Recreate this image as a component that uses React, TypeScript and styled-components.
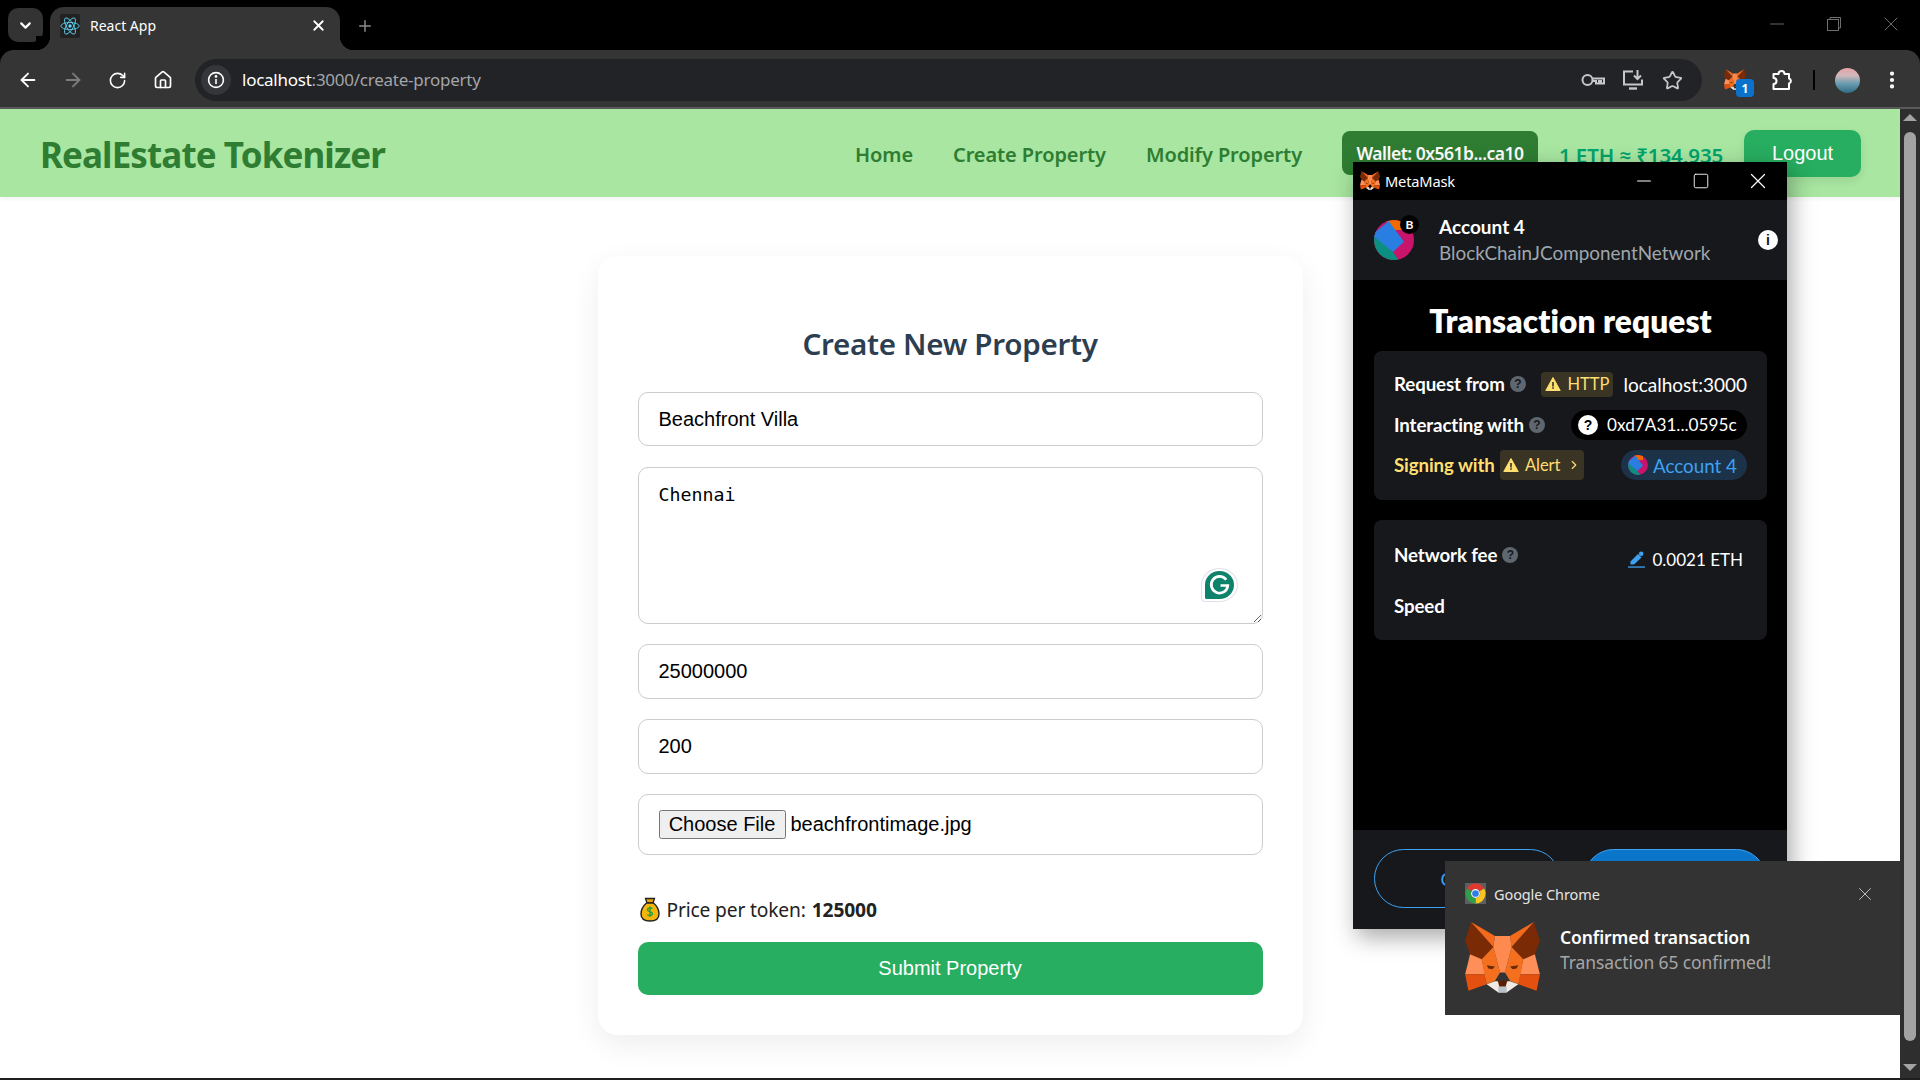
import React from "react";
import styled, { createGlobalStyle } from "styled-components";
import {
  ArrowLeft,
  ArrowRight,
  RotateCw,
  Home,
  Star,
  EllipsisVertical,
  ChevronDown,
  ChevronRight,
  X,
  Plus,
  Minus,
  Square,
} from "lucide-react";

const UI = `"Noto Sans", "Open Sans", sans-serif`;
const SANS = `"Liberation Sans", Arial, sans-serif`;
const MM = `Lato, "Noto Sans", sans-serif`;

const Global = createGlobalStyle`
  html, body { margin: 0; padding: 0; background: #000; }
  * { box-sizing: border-box; }
`;

const Screen = styled.div`
  position: relative;
  width: 1920px;
  height: 1080px;
  overflow: hidden;
  display: flex;
  flex-direction: column;
  background: #000;
  font-family: ${UI};
`;

/* ---------- browser chrome ---------- */
const TabStrip = styled.div`
  height: 50px;
  display: flex;
  align-items: flex-end;
  padding-left: 8px;
  background: #000;
`;
const TabMenu = styled.div`
  width: 35px;
  height: 34px;
  margin-bottom: 8px;
  border-radius: 10px;
  background: #333;
  color: #fff;
  display: flex;
  align-items: center;
  justify-content: center;
`;
const Tab = styled.div`
  position: relative;
  width: 290px;
  height: 43px;
  margin-left: 7px;
  padding: 0 13px 6px 10px;
  display: flex;
  align-items: center;
  background: #353535;
  border-radius: 14px 14px 0 0;
  color: #fff;
  font-size: 14px;
  &::before,
  &::after {
    content: "";
    position: absolute;
    bottom: 0;
    width: 14px;
    height: 14px;
  }
  &::before {
    left: -14px;
    background: radial-gradient(circle at 0 0, #000 14px, #353535 14.5px);
  }
  &::after {
    right: -14px;
    background: radial-gradient(circle at 100% 0, #000 14px, #353535 14.5px);
  }
`;
const Favicon = styled.div`
  width: 20px;
  height: 24px;
  background: #222;
  border-radius: 2px;
  margin-right: 10px;
  display: flex;
  align-items: center;
  justify-content: center;
`;
const TabTitle = styled.span`
  flex: 1;
`;
const NewTab = styled.div`
  width: 30px;
  height: 43px;
  padding-bottom: 6px;
  margin-left: 10px;
  color: #8a8a8a;
  display: flex;
  align-items: center;
  justify-content: center;
`;
const WindowButtons = styled.div`
  margin-left: auto;
  align-self: flex-start;
  display: flex;
  height: 48px;
  padding-right: 1px;
  color: #6e6e6e;
`;
const WindowButton = styled.div`
  width: 57px;
  display: flex;
  align-items: center;
  justify-content: center;
`;

const Toolbar = styled.div`
  height: 59px;
  padding: 3px 15px 0 5px;
  display: flex;
  align-items: center;
  background: #353535;
  border-radius: 14px 14px 0 0;
  border-bottom: 2px solid #5a5a5a;
`;
const ToolSlot = styled.div<{ $w?: number; $dim?: boolean }>`
  width: ${(p) => p.$w ?? 45}px;
  height: 40px;
  flex: none;
  position: relative;
  display: flex;
  align-items: center;
  justify-content: center;
  color: ${(p) => (p.$dim ? "#7c7c7c" : "#fff")};
`;
const Omnibox = styled.div`
  flex: 1;
  height: 42px;
  margin-left: 10px;
  padding: 0 10px 0 6px;
  display: flex;
  align-items: center;
  background: #222327;
  border-radius: 21px;
`;
const InfoBubble = styled.div`
  width: 30px;
  height: 30px;
  border-radius: 50%;
  background: #35363a;
  display: flex;
  align-items: center;
  justify-content: center;
`;
const Url = styled.div`
  flex: 1;
  margin-left: 11px;
  padding-bottom: 2px;
  font-size: 17px;
  letter-spacing: -0.25px;
  color: #a3a5a9;
`;
const UrlHost = styled.span`
  color: #fff;
`;
const OmniIcon = styled.div`
  width: 39px;
  display: flex;
  justify-content: center;
  color: #c7c7c7;
`;
const ExtBadge = styled.div`
  position: absolute;
  left: 34px;
  top: 19px;
  width: 18px;
  height: 18px;
  border-radius: 4px;
  background: #0b72cc;
  color: #fff;
  font-size: 12px;
  font-weight: 700;
  display: flex;
  align-items: center;
  justify-content: center;
`;
const Divider = styled.div`
  width: 2px;
  height: 20px;
  margin-left: 17px;
  background: #000;
  flex: none;
`;
const ProfileImage = styled.div`
  width: 25px;
  height: 25px;
  border-radius: 50%;
  background: linear-gradient(180deg, #e6a3a6 0%, #d2b7bb 30%, #6e9fb0 60%, #2f6b85 100%);
`;

/* ---------- page ---------- */
const Viewport = styled.div`
  height: 969px;
  display: flex;
  background: #fff;
`;
const Page = styled.main`
  flex: 1;
  display: flex;
  flex-direction: column;
  align-items: center;
  background: #fff;
`;
const Scrollbar = styled.div`
  width: 20px;
  padding: 5px 4px;
  background: #2e2e2e;
  display: flex;
  flex-direction: column;
  align-items: center;
`;
const ScrollArrow = styled.div<{ $down?: boolean }>`
  flex: none;
  width: 0;
  height: 0;
  border-left: 7px solid transparent;
  border-right: 7px solid transparent;
  ${(p) =>
    p.$down
      ? "border-top: 7px solid #a3a3a3; margin-top: 23px;"
      : "border-bottom: 7px solid #a3a3a3; margin-bottom: 11px;"}
`;
const ScrollThumb = styled.div`
  width: 12px;
  height: 909px;
  flex: none;
  border-radius: 6px;
  background: #a3a3a3;
`;
const BottomEdge = styled.div`
  height: 2px;
  background: #1f1f1f;
`;

const Navbar = styled.nav`
  width: 100%;
  height: 88px;
  flex: none;
  padding: 0 39px 0 40px;
  display: flex;
  align-items: center;
  justify-content: space-between;
  background: #a8e6a1;
  box-shadow: 0 2px 4px rgba(0, 0, 0, 0.05);
`;
const Brand = styled.div`
  padding-top: 3px;
  font-size: 35px;
  font-weight: 700;
  letter-spacing: -0.9px;
  color: #2e7d32;
`;
const NavGroup = styled.div`
  display: flex;
  align-items: center;
`;
const NavLink = styled.a`
  margin-right: 40px;
  padding-top: 3px;
  font-size: 20px;
  font-weight: 600;
  letter-spacing: -0.1px;
  color: #2e7d32;
`;
const WalletBadge = styled.div`
  width: 196px;
  height: 44px;
  border-radius: 8px;
  background: #2e7d32;
  color: #fff;
  font-size: 17.5px;
  font-weight: 600;
  letter-spacing: -0.5px;
  display: flex;
  align-items: center;
  justify-content: center;
`;
const Rate = styled.div`
  width: 164px;
  margin: 0 21px;
  padding-top: 3px;
  font-size: 20.5px;
  font-weight: 600;
  letter-spacing: -0.1px;
  white-space: nowrap;
  color: #00a36c;
`;
const LogoutButton = styled.button`
  width: 117px;
  height: 47px;
  border: 0;
  border-radius: 10px;
  background: #27ae60;
  color: #fff;
  font-family: ${SANS};
  font-size: 20px;
  box-shadow: 0 4px 10px rgba(0, 0, 0, 0.08);
`;

const Card = styled.section`
  width: 705px;
  height: 779px;
  margin-top: 59px;
  padding: 40px;
  border-radius: 20px;
  background: #fff;
  box-shadow: 0 10px 30px rgba(0, 0, 0, 0.07);
`;
const Title = styled.h2`
  margin: 27px 0 28px;
  height: 41px;
  line-height: 41px;
  text-align: center;
  font-size: 29.6px;
  font-weight: 600;
  letter-spacing: -0.3px;
  color: #2c3e50;
`;
const Form = styled.form`
  display: flex;
  flex-direction: column;
  gap: 20.5px;
`;
const fieldCss = `
  width: 100%;
  border: 1.25px solid #ccc;
  border-radius: 10px;
  background: #fff;
  color: #000;
  padding: 15px 20px;
  outline: none;
`;
const TextInput = styled.input`
  ${fieldCss}
  height: 54.4px;
  font-family: ${SANS};
  font-size: 20px;
`;
const AreaWrap = styled.div`
  position: relative;
  height: 157px;
`;
const TextArea = styled.textarea`
  ${fieldCss}
  display: block;
  height: 157px;
  resize: vertical;
  font-family: "DejaVu Sans Mono", monospace;
  font-size: 18.3px;
  line-height: 24px;
`;
const GrammarlyBadge = styled.div`
  position: absolute;
  right: 25px;
  bottom: 22px;
  width: 37px;
  height: 34px;
  padding: 2px 3px;
  background: #fff;
  border: 1px solid #dfe3ea;
  border-radius: 50% 50% 50% 4px;
  display: flex;
`;
const FileField = styled.div`
  ${fieldCss}
  height: 61px;
  display: flex;
  align-items: center;
  font-family: ${SANS};
  font-size: 20px;
`;
const FileButton = styled.button`
  width: 127px;
  height: 29px;
  padding: 0;
  margin-right: 5px;
  border: 1.25px solid #767676;
  border-radius: 2.5px;
  background: #efefef;
  color: #000;
  font-family: ${SANS};
  font-size: 20px;
`;
const PriceRow = styled.p`
  margin: 31px 0 1px;
  height: 46px;
  display: flex;
  align-items: center;
  font-size: 19.2px;
  letter-spacing: -0.15px;
  color: #222;
`;
const PriceValue = styled.strong`
  margin-left: 6px;
  font-weight: 700;
`;
const SubmitButton = styled.button`
  height: 53px;
  margin-top: 9px;
  border: 0;
  border-radius: 10px;
  background: #27ae60;
  color: #fff;
  font-family: ${SANS};
  font-size: 20px;
`;

/* ---------- MetaMask popup window ---------- */
const MetaWindow = styled.aside`
  position: absolute;
  left: 1353px;
  top: 162px;
  width: 434px;
  height: 767px;
  display: flex;
  flex-direction: column;
  background: #000;
  color: #fff;
  box-shadow: 4px 8px 22px rgba(0, 0, 0, 0.35);
`;
const MetaTitleBar = styled.div`
  height: 38px;
  flex: none;
  padding: 0 1px 0 7px;
  display: flex;
  align-items: center;
  font-size: 14.7px;
`;
const MetaTitle = styled.span`
  flex: 1;
  margin-left: 5px;
  letter-spacing: -0.2px;
`;
const MetaControl = styled.div`
  width: 57px;
  display: flex;
  justify-content: center;
`;
const AccountHeader = styled.header`
  height: 80px;
  flex: none;
  padding: 0 9px 0 21px;
  display: flex;
  align-items: center;
  background: #16181b;
  font-family: ${MM};
`;
const AvatarWrap = styled.div`
  position: relative;
  width: 40px;
  height: 40px;
  margin-right: 25px;
`;
const NetworkBadge = styled.div`
  position: absolute;
  right: -5px;
  top: -5px;
  width: 19px;
  height: 19px;
  border-radius: 50%;
  background: #000;
  color: #fff;
  font-size: 12px;
  font-weight: 700;
  display: flex;
  align-items: center;
  justify-content: center;
`;
const AccountInfo = styled.div`
  flex: 1;
`;
const AccountName = styled.div`
  font-size: 19px;
  font-weight: 700;
  line-height: 26px;
`;
const NetworkName = styled.div`
  font-size: 18.9px;
  line-height: 26px;
  color: #9fa6ae;
`;
const RoundIcon = styled.div<{ $bg: string; $fg: string; $size: number }>`
  width: ${(p) => p.$size}px;
  height: ${(p) => p.$size}px;
  flex: none;
  border-radius: 50%;
  background: ${(p) => p.$bg};
  color: ${(p) => p.$fg};
  font-size: ${(p) => Math.round(p.$size * 0.72)}px;
  font-weight: 800;
  font-family: ${SANS};
  display: flex;
  align-items: center;
  justify-content: center;
`;
const MetaBody = styled.div`
  flex: 1;
  padding: 21px 20px 0 21px;
  font-family: ${MM};
`;
const RequestTitle = styled.h1`
  margin: 0 0 10px;
  height: 40px;
  line-height: 40px;
  text-align: center;
  font-size: 31.6px;
  font-weight: 800;
  letter-spacing: 0.1px;
`;
const Panel = styled.div`
  border-radius: 8px;
  background: #16181b;
  padding: 13px 20px 14px;
  margin-bottom: 20px;
`;
const FeePanel = styled(Panel)`
  height: 120px;
  padding-top: 17px;
  margin-bottom: 0;
`;
const InfoRow = styled.div`
  height: 40.6px;
  display: flex;
  align-items: center;
  justify-content: space-between;
  font-size: 18.7px;
`;
const RowLeft = styled.div`
  display: flex;
  align-items: center;
`;
const Label = styled.span<{ $warn?: boolean }>`
  font-weight: 700;
  letter-spacing: -0.1px;
  color: ${(p) => (p.$warn ? "#ffdf70" : "#fff")};
`;
const HelpGap = styled.span`
  margin-left: 5px;
  display: flex;
`;
const WarnPill = styled.div<{ $h: number; $w: number }>`
  width: ${(p) => p.$w}px;
  height: ${(p) => p.$h}px;
  border-radius: 4px;
  background: #3a3424;
  color: #ffdf70;
  font-size: 16.5px;
  display: flex;
  align-items: center;
  justify-content: center;
  gap: 6px;
`;
const RowRight = styled.div`
  display: flex;
  align-items: center;
  gap: 10px;
  font-size: 19px;
`;
const Chip = styled.div<{ $bg: string; $fg: string; $w: number; $size: number; $gap: number }>`
  width: ${(p) => p.$w}px;
  height: 30px;
  padding: 0 4px 0 7px;
  border-radius: 15px;
  background: ${(p) => p.$bg};
  color: ${(p) => p.$fg};
  display: flex;
  align-items: center;
  gap: ${(p) => p.$gap}px;
  font-size: ${(p) => p.$size}px;
`;
const FeeRow = styled.div`
  display: flex;
  justify-content: space-between;
  font-size: 18.7px;
  line-height: 28px;
`;
const FeeValue = styled.div`
  margin: 9px 4px 0 0;
  display: flex;
  align-items: center;
  gap: 7px;
  font-size: 17px;
`;
const SpeedRow = styled.div`
  margin-top: 18px;
  font-size: 18.7px;
  line-height: 28px;
`;
const MetaFooter = styled.footer`
  height: 99px;
  flex: none;
  padding: 19px 0 0 21px;
  display: flex;
  gap: 24px;
  background: #16181b;
  font-family: ${MM};
`;
const PillButton = styled.button<{ $primary?: boolean; $w: number }>`
  width: ${(p) => p.$w}px;
  height: 59px;
  border-radius: 30px;
  border: 1px solid #3ea2f2;
  background: ${(p) => (p.$primary ? "#0a75c9" : "transparent")};
  color: ${(p) => (p.$primary ? "#fff" : "#3ea2f2")};
  font-family: ${MM};
  font-size: 18px;
`;

/* ---------- Windows notification ---------- */
const Toast = styled.aside`
  position: absolute;
  left: 1445px;
  top: 861px;
  width: 455px;
  height: 154px;
  padding: 22px 24px 0 20px;
  background: #333;
  color: #fff;
`;
const ToastHeader = styled.div`
  height: 21px;
  display: flex;
  align-items: center;
  font-size: 14.5px;
  color: #e4e4e4;
`;
const ToastApp = styled.span`
  flex: 1;
  margin-left: 8px;
  letter-spacing: -0.1px;
`;
const ToastBody = styled.div`
  margin-top: 17px;
  display: flex;
  gap: 20px;
`;
const ToastText = styled.div`
  padding-top: 4px;
`;
const ToastTitle = styled.div`
  font-size: 17.5px;
  font-weight: 600;
  line-height: 24px;
  letter-spacing: -0.1px;
`;
const ToastMessage = styled.div`
  padding-top: 1px;
  font-size: 17.5px;
  line-height: 25px;
  letter-spacing: -0.1px;
  color: #a6a6a6;
`;

/* ---------- drawings ---------- */
function Fox({ size }: { size: number }) {
  const mirror = (pts: number[][]) => pts.map(([x, y]) => `${285 - x},${y}`).join(" ");
  const plain = (pts: number[][]) => pts.map(([x, y]) => `${x},${y}`).join(" ");
  const parts: [string, number[][]][] = [
    ["#7a2a05", [[48, 138], [115, 213], [80, 250], [45, 235], [30, 195]]],
    ["#f36a1c", [[48, 138], [120, 180], [115, 213]]],
    ["#ff8f58", [[45, 235], [80, 250], [90, 295], [30, 295]]],
    ["#e4500f", [[30, 295], [88, 295], [95, 325], [40, 345]]],
    ["#f5701e", [[115, 213], [135, 290], [120, 315], [95, 325], [88, 295], [80, 250]]],
  ];
  return (
    <svg width={size} height={size * 0.975} viewBox="30 135 225 220">
      {parts.map(([fill, pts], i) => (
        <g key={i} fill={fill}>
          <polygon points={plain(pts)} />
          <polygon points={mirror(pts)} />
        </g>
      ))}
      <polygon fill="#ff8a50" points="120,180 165,180 170,213 150,290 135,290 115,213" />
      <polygon fill="#f0e9e4" points="95,325 120,316 165,316 190,325 155,350 130,350" />
      <polygon fill="#b9c0c8" points="130,332 155,332 155,350 130,350" />
      <polygon fill="#5a1e05" points="128,315 157,315 152,332 133,332" />
      <polygon fill="#6b2a0a" points="95,268 120,272 112,280 100,278" />
      <polygon fill="#6b2a0a" points="190,268 165,272 173,280 185,278" />
    </svg>
  );
}

function Jazz({ size }: { size: number }) {
  return (
    <svg width={size} height={size} viewBox="0 0 40 40" style={{ borderRadius: "50%", display: "block" }}>
      <rect width="40" height="40" fill="#c8146b" />
      <polygon fill="#f56a00" points="10,-2 30,-2 30,10 18,10" />
      <polygon fill="#0a8f80" points="0,15 19,32 26,42 0,42" />
      <polygon fill="#2a7de1" points="14.7,1 30,21.7 19,32 -2,15" />
    </svg>
  );
}

function ReactLogo() {
  return (
    <svg width="20" height="20" viewBox="-12 -12 24 24" fill="none" stroke="#61dafb" strokeWidth="1">
      <circle r="2" fill="#61dafb" stroke="none" />
      <ellipse rx="11" ry="4.2" />
      <ellipse rx="11" ry="4.2" transform="rotate(60)" />
      <ellipse rx="11" ry="4.2" transform="rotate(120)" />
    </svg>
  );
}

function InfoGlyph() {
  return (
    <svg width="18" height="18" viewBox="0 0 18 18" fill="none" stroke="#fff" strokeWidth="1.6">
      <circle cx="9" cy="9" r="7.4" />
      <path d="M9 8v5" />
      <circle cx="9" cy="5.4" r="0.6" fill="#fff" />
    </svg>
  );
}

function KeyGlyph() {
  return (
    <svg width="24" height="14" viewBox="0 0 24 14" fill="none" stroke="#c7c7c7" strokeWidth="2" style={{ marginRight: 4 }}>
      <circle cx="6.5" cy="7" r="5" />
      <path d="M11.5 5.5H23v5h-3V8h-2v2.5h-3V8h-3.500" />
    </svg>
  );
}

function InstallGlyph() {
  return (
    <svg width="22" height="22" viewBox="0 0 22 22" fill="none" stroke="#c7c7c7" strokeWidth="2" style={{ marginRight: 2 }}>
      <path d="M11 2.500H2v13h18v-5" />
      <path d="M7 19.500h8" strokeWidth="2.400" />
      <path d="M15.500 1v8M12 6.500l3.500 3.500 3.500-3.500" />
    </svg>
  );
}

function PuzzleGlyph() {
  return (
    <svg width="22" height="22" viewBox="0 0 22 22" fill="none" stroke="#fff" strokeWidth="2" strokeLinejoin="round">
      <path d="M2.500 5H7.500a3 3 0 0 1 6 0H18v4.500a2.600 2.600 0 0 1 0 5V20H2.500v-5a3 3 0 0 0 0-6Z" />
    </svg>
  );
}

function RestoreGlyph() {
  return (
    <svg width="14" height="14" viewBox="0 0 14 14" fill="none" stroke="currentColor">
      <rect x="0.500" y="2.500" width="11" height="11" />
      <path d="M3 2.500V.5h10.500V11h-2" />
    </svg>
  );
}

function WarnGlyph({ size }: { size: number }) {
  return (
    <svg width={size} height={size} viewBox="0 0 16 16">
      <path d="M8 1.500 15.200 14.500H.8Z" fill="#ffdf70" stroke="#ffdf70" strokeLinejoin="round" />
      <rect x="7.200" y="6" width="1.600" height="4.500" fill="#3a3424" />
      <rect x="7.200" y="11.200" width="1.600" height="1.600" fill="#3a3424" />
    </svg>
  );
}

function HelpDot() {
  return (
    <RoundIcon $bg="#5e6670" $fg="#16181b" $size={16}>
      ?
    </RoundIcon>
  );
}

function PencilGlyph() {
  return (
    <svg width="17" height="17" viewBox="0 0 17 17" fill="#3ea2f2">
      <path d="M2.500 10.500 10 3l3.500 3.500L6 13.500H2.500Z" />
      <circle cx="13.200" cy="2.800" r="2.300" />
      <rect y="15.400" width="17" height="1.300" />
    </svg>
  );
}

function ChromeLogo() {
  return (
    <svg width="21" height="21" viewBox="0 0 20 20" fill="none" strokeWidth="5" style={{ background: "#5c5e60" }}>
      <path d="M3.940 6.500A7 7 0 0 1 16.060 6.500" stroke="#e0392e" />
      <path d="M16.060 6.500A7 7 0 0 1 10 17" stroke="#f7c51e" />
      <path d="M10 17A7 7 0 0 1 3.940 6.500" stroke="#2f9e4a" />
      <circle cx="10" cy="10" r="4.200" fill="#fff" stroke="none" />
      <circle cx="10" cy="10" r="3.200" fill="#2f7de8" stroke="none" />
    </svg>
  );
}

function MoneyBag() {
  return (
    <svg width="20" height="25" viewBox="0 0 20 25" style={{ marginRight: 7, marginLeft: 2, flex: "none" }}>
      <path d="M5.500 1.500h9l-1.500 4.500H7Z" fill="#e5a50a" stroke="#222" strokeWidth="1.300" />
      <path d="M6.500 6h7C17 9 19 13 19 17c0 4.500-3.500 7-9 7s-9-2.500-9-7c0-4 2-8 5.500-11Z" fill="#f5b50f" stroke="#222" strokeWidth="1.400" />
      <path d="M12.500 11.500c-1-1-5-1-5 1.200s5 1.600 5 3.900-4 2.200-5.200 1M10 9.500v10.500" fill="none" stroke="#1a9e3a" strokeWidth="1.300" />
    </svg>
  );
}

function GrammarlyMark() {
  return (
    <svg width="29" height="28" viewBox="0 0 28 27">
      <path d="M14 0a14 13.500 0 0 1 0 27H1.500A1.500 1.500 0 0 1 0 25.500V13.500A14 13.500 0 0 1 14 0Z" fill="#0f826c" />
      <path d="M20.500 8.500A8 8 0 1 0 22 14h-7" fill="none" stroke="#fff" strokeWidth="2.600" />
    </svg>
  );
}

export default function App() {
  return (
    <Screen>
      <Global />
      <TabStrip>
        <TabMenu>
          <ChevronDown size={17} strokeWidth={3} />
        </TabMenu>
        <Tab>
          <Favicon>
            <ReactLogo />
          </Favicon>
          <TabTitle>React App</TabTitle>
          <X size={17} strokeWidth={2.5} />
        </Tab>
        <NewTab>
          <Plus size={18} strokeWidth={2} />
        </NewTab>
        <WindowButtons>
          <WindowButton>
            <Minus size={22} strokeWidth={1} />
          </WindowButton>
          <WindowButton>
            <RestoreGlyph />
          </WindowButton>
          <WindowButton>
            <X size={24} strokeWidth={1} />
          </WindowButton>
        </WindowButtons>
      </TabStrip>

      <Toolbar>
        <ToolSlot>
          <ArrowLeft size={22} strokeWidth={2} />
        </ToolSlot>
        <ToolSlot $dim>
          <ArrowRight size={22} strokeWidth={2} />
        </ToolSlot>
        <ToolSlot>
          <RotateCw size={19} strokeWidth={2} />
        </ToolSlot>
        <ToolSlot>
          <Home size={20} strokeWidth={2} />
        </ToolSlot>
        <Omnibox>
          <InfoBubble>
            <InfoGlyph />
          </InfoBubble>
          <Url>
            <UrlHost>localhost</UrlHost>:3000/create-property
          </Url>
          <OmniIcon>
            <KeyGlyph />
          </OmniIcon>
          <OmniIcon>
            <InstallGlyph />
          </OmniIcon>
          <OmniIcon>
            <Star size={21} strokeWidth={2} />
          </OmniIcon>
        </Omnibox>
        <ToolSlot $w={66}>
          <Fox size={22} />
          <ExtBadge>1</ExtBadge>
        </ToolSlot>
        <ToolSlot $w={28}>
          <PuzzleGlyph />
        </ToolSlot>
        <Divider />
        <ToolSlot $w={64}>
          <ProfileImage />
        </ToolSlot>
        <ToolSlot $w={26}>
          <EllipsisVertical size={22} strokeWidth={2.6} />
        </ToolSlot>
      </Toolbar>

      <Viewport>
        <Page>
          <Navbar>
            <Brand>RealEstate Tokenizer</Brand>
            <NavGroup>
              <NavLink>Home</NavLink>
              <NavLink>Create Property</NavLink>
              <NavLink>Modify Property</NavLink>
              <WalletBadge>Wallet: 0x561b...ca10</WalletBadge>
              <Rate>1 ETH ≈ ₹134,935</Rate>
              <LogoutButton>Logout</LogoutButton>
            </NavGroup>
          </Navbar>
          <Card>
            <Title>Create New Property</Title>
            <Form>
              <TextInput readOnly value="Beachfront Villa" />
              <AreaWrap>
                <TextArea readOnly value="Chennai" />
                <GrammarlyBadge>
                  <GrammarlyMark />
                </GrammarlyBadge>
              </AreaWrap>
              <TextInput readOnly value="25000000" />
              <TextInput readOnly value="200" />
              <FileField>
                <FileButton type="button">Choose File</FileButton>
                beachfrontimage.jpg
              </FileField>
            </Form>
            <PriceRow>
              <MoneyBag />
              Price per token:<PriceValue>125000</PriceValue>
            </PriceRow>
            <Form>
              <SubmitButton type="button">Submit Property</SubmitButton>
            </Form>
          </Card>
        </Page>
        <Scrollbar>
          <ScrollArrow />
          <ScrollThumb />
          <ScrollArrow $down />
        </Scrollbar>
      </Viewport>
      <BottomEdge />

      <MetaWindow>
        <MetaTitleBar>
          <Fox size={20} />
          <MetaTitle>MetaMask</MetaTitle>
          <MetaControl>
            <Minus size={22} strokeWidth={1.1} />
          </MetaControl>
          <MetaControl>
            <Square size={18} strokeWidth={1.2} />
          </MetaControl>
          <MetaControl>
            <X size={26} strokeWidth={1.1} />
          </MetaControl>
        </MetaTitleBar>
        <AccountHeader>
          <AvatarWrap>
            <Jazz size={40} />
            <NetworkBadge>B</NetworkBadge>
          </AvatarWrap>
          <AccountInfo>
            <AccountName>Account 4</AccountName>
            <NetworkName>BlockChainJComponentNetwork</NetworkName>
          </AccountInfo>
          <RoundIcon $bg="#fff" $fg="#16181b" $size={20}>
            i
          </RoundIcon>
        </AccountHeader>
        <MetaBody>
          <RequestTitle>Transaction request</RequestTitle>
          <Panel>
            <InfoRow>
              <RowLeft>
                <Label>Request from</Label>
                <HelpGap>
                  <HelpDot />
                </HelpGap>
              </RowLeft>
              <RowRight>
                <WarnPill $w={72} $h={25}>
                  <WarnGlyph size={16} />
                  HTTP
                </WarnPill>
                localhost:3000
              </RowRight>
            </InfoRow>
            <InfoRow>
              <RowLeft>
                <Label>Interacting with</Label>
                <HelpGap>
                  <HelpDot />
                </HelpGap>
              </RowLeft>
              <Chip $bg="#000" $fg="#fff" $w={176} $size={17.2} $gap={9}>
                <RoundIcon $bg="#fff" $fg="#000" $size={20}>
                  ?
                </RoundIcon>
                0xd7A31...0595c
              </Chip>
            </InfoRow>
            <InfoRow>
              <RowLeft>
                <Label $warn>Signing with</Label>
                <HelpGap>
                  <WarnPill $w={84} $h={30}>
                    <WarnGlyph size={16} />
                    Alert
                    <ChevronRight size={14} />
                  </WarnPill>
                </HelpGap>
              </RowLeft>
              <Chip $bg="#1c3249" $fg="#3ea2f2" $w={126} $size={18.8} $gap={5}>
                <Jazz size={20} />
                Account 4
              </Chip>
            </InfoRow>
          </Panel>
          <FeePanel>
            <FeeRow>
              <RowLeft>
                <Label>Network fee</Label>
                <HelpGap>
                  <HelpDot />
                </HelpGap>
              </RowLeft>
              <FeeValue>
                <PencilGlyph />
                0.0021 ETH
              </FeeValue>
            </FeeRow>
            <SpeedRow>
              <Label>Speed</Label>
            </SpeedRow>
          </FeePanel>
        </MetaBody>
        <MetaFooter>
          <PillButton $w={186}>Cancel</PillButton>
          <PillButton $w={182} $primary>
            Confirm
          </PillButton>
        </MetaFooter>
      </MetaWindow>

      <Toast>
        <ToastHeader>
          <ChromeLogo />
          <ToastApp>Google Chrome</ToastApp>
          <X size={22} strokeWidth={1} color="#c8c8c8" />
        </ToastHeader>
        <ToastBody>
          <Fox size={75} />
          <ToastText>
            <ToastTitle>Confirmed transaction</ToastTitle>
            <ToastMessage>Transaction 65 confirmed!</ToastMessage>
          </ToastText>
        </ToastBody>
      </Toast>
    </Screen>
  );
}
